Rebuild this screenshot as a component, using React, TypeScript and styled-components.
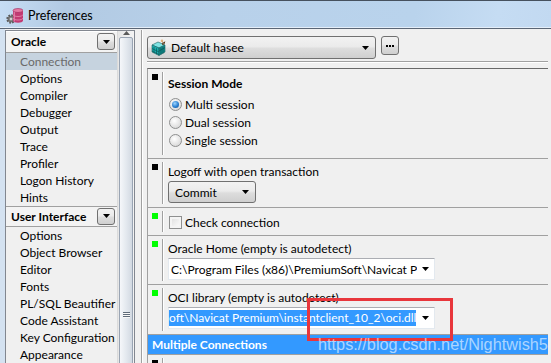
import React from 'react'
import styled, { createGlobalStyle } from 'styled-components'

const GlobalStyle = createGlobalStyle`
  html, body {
    margin: 0;
    padding: 0;
    background: #f0f0f0;
    overflow: hidden;
  }
  body {
    font-family: Lato, "Noto Sans", sans-serif;
    font-size: 12px;
    color: #000;
  }
`

const Window = styled.div`
  position: relative;
  width: 551px;
  height: 363px;
  overflow: hidden;
  display: flex;
  flex-direction: column;
  background: #f0f0f0;
`

const TitleBar = styled.div`
  box-sizing: border-box;
  height: 29px;
  flex-shrink: 0;
  display: flex;
  align-items: center;
  gap: 5px;
  padding: 1px 0 0 6px;
  border-top: 1px solid #46515e;
  border-bottom: 1px solid #5b6675;
  box-shadow: inset 0 -1px 0 #e4eef9;
  background: linear-gradient(
    100deg,
    #c6ddf4 0%,
    #b2cae3 12%,
    #b8d1ea 40%,
    #b9d3ec 75%,
    #c5dcf3 90%,
    #c2d9f1 100%
  );
  font-size: 12.5px;
`

const Body = styled.div`
  flex: 1;
  min-height: 0;
  display: flex;
  padding-top: 1px;
  border-left: 5px solid #d4e2f1;
`

const LeftPanel = styled.div`
  box-sizing: border-box;
  width: 130px;
  flex-shrink: 0;
  display: flex;
  border: 1px solid #828790;
  border-bottom: none;
  background: #f0f0f0;
  overflow: hidden;
`

const List = styled.div`
  flex: 1;
  display: flex;
  flex-direction: column;
`

const GroupHeader = styled.div<{ $first?: boolean }>`
  box-sizing: border-box;
  height: 22px;
  display: flex;
  align-items: center;
  justify-content: space-between;
  padding: 0 2px 0 5px;
  border-top: 1px solid ${(p) => (p.$first ? '#ffffff' : '#a0a0a0')};
  border-bottom: 1px solid #a0a0a0;
  background: #f3f3f3;
  font-weight: 700;
`

const DropButton = styled.div`
  box-sizing: border-box;
  width: 18px;
  height: 17px;
  display: flex;
  align-items: center;
  justify-content: center;
  border: 1px solid #707070;
  border-radius: 3px;
  background: linear-gradient(#f2f2f2 0%, #ebebeb 45%, #dddddd 55%, #cfcfcf 100%);
`

const Item = styled.div<{ $selected?: boolean }>`
  height: 17px;
  line-height: 17px;
  padding-left: 14px;
  white-space: nowrap;
  background: ${(p) => (p.$selected ? '#c6d3df' : 'transparent')};
  color: ${(p) => (p.$selected ? '#6a6a6a' : '#000')};
`

const ScrollBar = styled.div`
  width: 16px;
  flex-shrink: 0;
  display: flex;
  flex-direction: column;
  align-items: center;
  border-left: 1px solid #dadada;
  background: linear-gradient(to right, #e6e6e6, #f4f4f4);
`

const ScrollArrow = styled.div`
  height: 17px;
  width: 100%;
  display: flex;
  align-items: center;
  justify-content: center;
`

const Thumb = styled.div`
  box-sizing: border-box;
  width: 14px;
  height: 560px;
  flex-shrink: 0;
  margin-top: 2px;
  padding-top: 274px;
  display: flex;
  flex-direction: column;
  align-items: center;
  gap: 1px;
  border: 1px solid #99a4b3;
  border-radius: 2px;
  background: linear-gradient(to right, #f5f7fa, #e4e9ef 50%, #d2d9e2);
`

const GripLine = styled.div`
  width: 7px;
  height: 1px;
  background: #5f6b7a;
  box-shadow: 0 1px 0 #f8f8f8;
`

const RightPanel = styled.div`
  flex: 1;
  min-width: 0;
  display: flex;
  flex-direction: column;
  margin-left: 6px;
  padding: 0 3px 0 5px;
  border-left: 1px solid #a0a0a0;
  box-shadow: inset 1px 0 0 #ffffff;
`

const Toolbar = styled.div`
  display: flex;
  align-items: flex-start;
  gap: 5px;
  padding: 6px 0 2px;
  margin-bottom: 6px;
  border-bottom: 1px solid #a0a0a0;
  box-shadow: 0 1px 0 #ffffff;
`

const ButtonCombo = styled.div<{ $width: number; $height: number }>`
  box-sizing: border-box;
  width: ${(p) => p.$width}px;
  height: ${(p) => p.$height}px;
  flex-shrink: 0;
  display: flex;
  align-items: center;
  gap: 4px;
  padding: 0 6px 0 3px;
  border: 1px solid #707070;
  border-radius: 3px;
  background: linear-gradient(#f2f2f2 0%, #ebebeb 45%, #dddddd 55%, #cfcfcf 100%);
  white-space: nowrap;
`

const ComboText = styled.span`
  flex: 1;
  overflow: hidden;
`

const DotsButton = styled.div`
  box-sizing: border-box;
  width: 18px;
  height: 19px;
  display: flex;
  align-items: center;
  justify-content: center;
  gap: 1px;
  border: 1px solid #707070;
  border-radius: 3px;
  background: linear-gradient(#f2f2f2 0%, #ebebeb 45%, #dddddd 55%, #cfcfcf 100%);
`

const Dot = styled.span`
  width: 2px;
  height: 2px;
  background: #000;
`

const Settings = styled.div`
  display: flex;
  flex-direction: column;
  border-top: 1px solid #696969;
  border-left: 1px solid #a0a0a0;
`

const Row = styled.div`
  display: flex;
  border-bottom: 1px solid #a0a0a0;
`

const MarkerCol = styled.div`
  width: 14px;
  flex-shrink: 0;
  padding: 5px 0 0 4px;
  box-sizing: border-box;
`

const Marker = styled.div<{ $color: string }>`
  width: 6px;
  height: 6px;
  background: ${(p) => p.$color};
`

const Separator = styled.div`
  width: 1px;
  flex-shrink: 0;
  margin: 3px 0;
  background: #a0a0a0;
  box-shadow: 1px 0 0 #ffffff;
`

const Content = styled.div<{ $bottom?: number }>`
  flex: 1;
  min-width: 0;
  display: flex;
  flex-direction: column;
  padding: 4px 0 ${(p) => p.$bottom ?? 4}px 5px;
`

const SectionTitle = styled.div`
  line-height: 22px;
  font-weight: 700;
`

const RadioGroup = styled.div`
  display: flex;
  flex-direction: column;
  padding-bottom: 5px;
`

const Option = styled.div`
  height: 18px;
  display: flex;
  align-items: center;
  gap: 3px;
  padding-left: 1px;
`

const CheckOption = styled(Option)`
  margin-top: 1px;
`

const RadioCircle = styled.span<{ $checked?: boolean }>`
  box-sizing: border-box;
  width: 13px;
  height: 13px;
  border-radius: 50%;
  border: 1px solid #8e8f8f;
  display: flex;
  align-items: center;
  justify-content: center;
  background: radial-gradient(circle at 40% 35%, #ffffff, #e2e2e2 60%, #cfcfcf);
  &::after {
    content: '';
    display: ${(p) => (p.$checked ? 'block' : 'none')};
    width: 7px;
    height: 7px;
    border-radius: 50%;
    background: radial-gradient(circle at 40% 35%, #9bd5ff, #2a7fd0 55%, #0d4d8e);
  }
`

const CheckBox = styled.span`
  box-sizing: border-box;
  width: 13px;
  height: 13px;
  border: 1px solid #8e8f8f;
  background: linear-gradient(135deg, #dcdcdc, #ffffff);
  box-shadow: inset 0 0 0 2px #f4f4f4;
`

const Label = styled.div`
  line-height: 18px;
  white-space: nowrap;
`

const PathInput = styled.div`
  box-sizing: border-box;
  width: 267px;
  height: 22px;
  display: flex;
  align-items: center;
  background: #ffffff;
  border: 1px solid #e3e9ef;
  border-top-color: #abadb3;
`

const PathText = styled.div`
  flex: 1;
  min-width: 0;
  overflow: hidden;
  white-space: nowrap;
  padding-left: 2px;
`

const Selected = styled.span`
  display: inline-block;
  margin-left: -4px;
  padding-left: 2px;
  line-height: 16px;
  background: #3399ff;
  color: #ffffff;
`

const ArrowBox = styled.div`
  width: 17px;
  flex-shrink: 0;
  display: flex;
  align-items: center;
  justify-content: center;
`

const SectionBar = styled.div`
  height: 19px;
  line-height: 19px;
  padding-left: 4px;
  background: #3399ff;
  color: #ffffff;
  font-weight: 700;
  border-bottom: 1px solid #a0a0a0;
`

const EmptyLine = styled.div`
  height: 18px;
`

const Annotation = styled.div`
  position: absolute;
  left: 307px;
  top: 298px;
  width: 146px;
  height: 43px;
  box-sizing: border-box;
  border: 3px solid #e8363c;
  pointer-events: none;
`

const Watermark = styled.div`
  position: absolute;
  left: 318px;
  top: 335px;
  font-family: "Liberation Sans", Arial, sans-serif;
  font-size: 16.3px;
  line-height: 19px;
  color: rgba(255, 255, 255, 0.6);
  white-space: nowrap;
  pointer-events: none;
`

const DownArrow = () => (
  <svg width="7" height="4" viewBox="0 0 7 4">
    <path d="M0 0H7L3.5 4Z" fill="#000" />
  </svg>
)

const AppIcon = () => (
  <svg width="17" height="17" viewBox="0 0 17 17">
    <g fill="#8c8c8c" stroke="#5a5a5a" strokeWidth="0.6">
      <circle cx="5" cy="12" r="3.6" strokeDasharray="1.6 1.2" strokeWidth="2.2" />
      <circle cx="5" cy="12" r="2.6" />
    </g>
    <circle cx="5" cy="12" r="1" fill="#e8e8e8" />
    <path d="M7 3.5v10c0 1.3 2.4 2.3 5 2.3s5-1 5-2.3v-10z" fill="#c23a72" />
    <ellipse cx="12" cy="3.5" rx="5" ry="2" fill="#e47aa3" stroke="#9c2357" strokeWidth="0.6" />
    <path d="M7 7.5c0 1.2 2.4 2 5 2s5-.8 5-2" fill="none" stroke="#e990b3" strokeWidth="0.8" />
    <path d="M7 11c0 1.2 2.4 2 5 2s5-.8 5-2" fill="none" stroke="#e990b3" strokeWidth="0.8" />
    <path d="M8.3 5v9.5" stroke="#e38bb0" strokeWidth="1" />
  </svg>
)

const ProfileIcon = () => (
  <svg width="16" height="17" viewBox="0 0 16 17">
    <path d="M1 6l6-3 7 3-6 3z" fill="#7fe3e3" stroke="#1d5f5f" strokeWidth="0.6" />
    <path d="M1 6v7l7 3.5V9z" fill="#19b0b0" stroke="#1d5f5f" strokeWidth="0.6" />
    <path d="M8 9v7.5l6-3.5V6z" fill="#0f8d8d" stroke="#1d5f5f" strokeWidth="0.6" />
    <path d="M3 8v6M5.5 9.2v6M1 9.5l7 3.5M1 12l7 3.5" stroke="#0b4b4b" strokeWidth="0.6" />
    <path d="M10 9v6.5M12 8v6.5M8 12l6-3.4" stroke="#0b4b4b" strokeWidth="0.6" />
    <path d="M10.5 1.5l2 2.5-1.5 1.2 2-.2.8-2.4" fill="none" stroke="#5a3b1a" strokeWidth="1" />
    <circle cx="11" cy="1.8" r="1.2" fill="#e4b27c" />
  </svg>
)

const UpTriangle = () => (
  <svg width="7" height="4" viewBox="0 0 7 4">
    <path d="M0 4H7L3.5 0Z" fill="#5a5a5a" />
  </svg>
)

const oracleItems = ['Connection', 'Options', 'Compiler', 'Debugger', 'Output', 'Trace', 'Profiler', 'Logon History', 'Hints']
const uiItems = ['Options', 'Object Browser', 'Editor', 'Fonts', 'PL/SQL Beautifier', 'Code Assistant', 'Key Configuration', 'Appearance']

export default function App() {
  return (
    <Window>
      <GlobalStyle />
      <TitleBar>
        <AppIcon />
        <span>Preferences</span>
      </TitleBar>
      <Body>
        <LeftPanel>
          <List>
            <GroupHeader $first>
              <span>Oracle</span>
              <DropButton>
                <DownArrow />
              </DropButton>
            </GroupHeader>
            {oracleItems.map((name, i) => (
              <Item key={name} $selected={i === 0}>
                {name}
              </Item>
            ))}
            <GroupHeader>
              <span>User Interface</span>
              <DropButton>
                <DownArrow />
              </DropButton>
            </GroupHeader>
            {uiItems.map((name) => (
              <Item key={name}>{name}</Item>
            ))}
          </List>
          <ScrollBar>
            <ScrollArrow>
              <UpTriangle />
            </ScrollArrow>
            <Thumb>
              <GripLine />
              <GripLine />
              <GripLine />
            </Thumb>
          </ScrollBar>
        </LeftPanel>

        <RightPanel>
          <Toolbar>
            <ButtonCombo $width={229} $height={23}>
              <ProfileIcon />
              <ComboText>Default hasee</ComboText>
              <DownArrow />
            </ButtonCombo>
            <DotsButton>
              <Dot />
              <Dot />
              <Dot />
            </DotsButton>
          </Toolbar>

          <Settings>
            <Row>
              <MarkerCol>
                <Marker $color="#000000" />
              </MarkerCol>
              <Separator />
              <Content>
                <SectionTitle>Session Mode</SectionTitle>
                <RadioGroup>
                  <Option>
                    <RadioCircle $checked />
                    Multi session
                  </Option>
                  <Option>
                    <RadioCircle />
                    Dual session
                  </Option>
                  <Option>
                    <RadioCircle />
                    Single session
                  </Option>
                </RadioGroup>
              </Content>
            </Row>

            <Row>
              <MarkerCol>
                <Marker $color="#000000" />
              </MarkerCol>
              <Separator />
              <Content>
                <Label>Logoff with open transaction</Label>
                <ButtonCombo $width={88} $height={22}>
                  <ComboText>&nbsp;Commit</ComboText>
                  <DownArrow />
                </ButtonCombo>
              </Content>
            </Row>

            <Row>
              <MarkerCol>
                <Marker $color="#00ff00" />
              </MarkerCol>
              <Separator />
              <Content>
                <CheckOption>
                  <CheckBox />
                  Check connection
                </CheckOption>
              </Content>
            </Row>

            <Row>
              <MarkerCol>
                <Marker $color="#00ff00" />
              </MarkerCol>
              <Separator />
              <Content>
                <Label>Oracle Home (empty is autodetect)</Label>
                <PathInput>
                  <PathText>C:\Program Files (x86)\PremiumSoft\Navicat P</PathText>
                  <ArrowBox>
                    <DownArrow />
                  </ArrowBox>
                </PathInput>
              </Content>
            </Row>

            <Row>
              <MarkerCol>
                <Marker $color="#00ff00" />
              </MarkerCol>
              <Separator />
              <Content $bottom={5}>
                <Label>OCI library (empty is autodetect)</Label>
                <PathInput>
                  <PathText>
                    <Selected>oft\Navicat Premium\instantclient_10_2\oci.dll</Selected>
                  </PathText>
                  <ArrowBox>
                    <DownArrow />
                  </ArrowBox>
                </PathInput>
              </Content>
            </Row>

            <SectionBar>Multiple Connections</SectionBar>

            <Row>
              <MarkerCol>
                <Marker $color="#000000" />
              </MarkerCol>
              <Separator />
              <Content>
                <EmptyLine />
              </Content>
            </Row>
          </Settings>
        </RightPanel>
      </Body>

      <Annotation />
      <Watermark>https://blog.csdn.net/Nightwish5</Watermark>
    </Window>
  )
}
